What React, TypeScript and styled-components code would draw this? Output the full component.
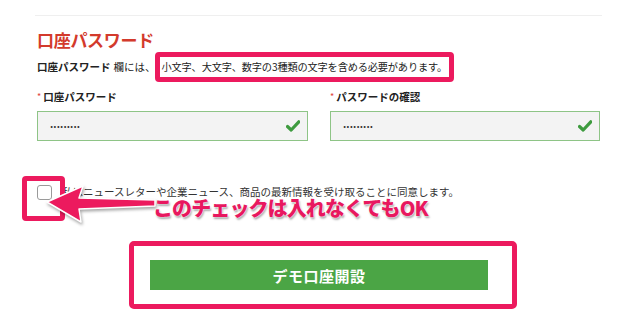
import React from "react";
import styled, { createGlobalStyle } from "styled-components";

const Global = createGlobalStyle`
  html, body { margin: 0; padding: 0; background: #fff; }
  body {
    font-family: "Noto Sans CJK JP", "Noto Sans", sans-serif;
    color: #222;
  }
`;

const PINK = "#ec1a5e";

const Page = styled.div`
  width: 640px;
  height: 318px;
  box-sizing: border-box;
  padding: 15px 38px 0 35px;
  overflow: hidden;
`;

const Divider = styled.div`
  height: 1px;
  background: #efefef;
`;

const Content = styled.div`
  padding-left: 2px;
  display: flex;
  flex-direction: column;
`;

const Title = styled.h2`
  margin: 14px 0 0;
  font-size: 17px;
  line-height: 20px;
  font-weight: 700;
  color: #d33a2c;
  letter-spacing: -0.3px;
`;

const Desc = styled.p`
  margin: 9px 0 0;
  font-size: 10.5px;
  line-height: 16px;
  color: #222;
`;

const DescStrong = styled.strong`
  font-weight: 700;
  margin-right: 3px;
`;

const Highlight = styled.span`
  position: relative;
  display: inline-block;
  margin-left: 6px;
  font-size: 10.2px;
  letter-spacing: -0.15px;
  &::after {
    content: "";
    position: absolute;
    left: -7px;
    right: -7px;
    top: -7px;
    bottom: -7px;
    border: 5px solid ${PINK};
    border-radius: 4px;
    pointer-events: none;
  }
`;

const Fields = styled.div`
  margin-top: 14px;
  display: grid;
  grid-template-columns: 271px 270px;
  column-gap: 22px;
`;

const FieldGroup = styled.div`
  display: flex;
  flex-direction: column;
  gap: 6px;
`;

const Label = styled.label`
  font-size: 10.5px;
  line-height: 16px;
  font-weight: 700;
  color: #222;
  display: flex;
  align-items: center;
  gap: 2px;
`;

const Req = styled.span`
  color: #e0443a;
  font-size: 9px;
  font-weight: 400;
`;

const Field = styled.div`
  height: 30px;
  box-sizing: border-box;
  border: 1px solid #8ec486;
  background: #f3f3f3;
  display: flex;
  align-items: center;
  justify-content: space-between;
  padding: 0 7px 0 12px;
`;

const Dots = styled.span`
  font-size: 10px;
  font-weight: 700;
  color: #333;
  letter-spacing: 0.1px;
  line-height: 10px;
  transform: translateY(-2px);
`;

const Check = () => (
  <svg width="14" height="12" viewBox="0 0 14 12">
    <path
      d="M1.5 6.5 L5.2 10 L12.8 1.8"
      fill="none"
      stroke="#3e9b3f"
      strokeWidth="3.2"
      strokeLinecap="round"
      strokeLinejoin="round"
    />
  </svg>
);

const CheckRow = styled.div`
  position: relative;
  margin-top: 43px;
  display: flex;
  align-items: center;
  gap: 10px;
  height: 16px;
`;

const Box = styled.span`
  width: 15px;
  height: 15px;
  box-sizing: border-box;
  border: 1px solid #9a9a9a;
  border-radius: 3px;
  background: #fff;
  flex: none;
`;

const CheckText = styled.span`
  font-size: 10.5px;
  line-height: 12px;
  color: #333;
`;

const Mark = styled.span`
  position: absolute;
  left: -15px;
  top: -8px;
  width: 43px;
  height: 45px;
  box-sizing: border-box;
  border: 5px solid ${PINK};
  border-radius: 4px;
`;

const Arrow = styled.svg`
  position: absolute;
  left: 0;
  top: 0;
  overflow: visible;
  filter: drop-shadow(1px 2px 1.5px rgba(0, 0, 0, 0.35));
`;

const Note = styled.span`
  position: absolute;
  left: 116px;
  top: 14px;
  white-space: nowrap;
  font-size: 20px;
  line-height: 20px;
  font-weight: 900;
  color: #e8185f;
  letter-spacing: -0.9px;
  text-shadow: 0 0 1px #fff, 0 0 2px #fff, 1px 2px 2px rgba(0, 0, 0, 0.35);
`;

const ButtonFrame = styled.div`
  margin-top: 41px;
  margin-left: 92px;
  width: 388px;
  height: 68px;
  box-sizing: border-box;
  border: 5px solid ${PINK};
  border-radius: 5px;
  padding: 14px 24px 14px 16px;
`;

const Submit = styled.button`
  width: 100%;
  height: 30px;
  border: none;
  background: #4ba545;
  color: #fff;
  font-family: "Noto Sans CJK JP", sans-serif;
  font-size: 15px;
  font-weight: 700;
  letter-spacing: 0.5px;
  display: flex;
  align-items: center;
  justify-content: center;
  padding: 0;
`;

export default function App() {
  return (
    <>
      <Global />
      <Page>
        <Divider />
        <Content>
          <Title>口座パスワード</Title>
          <Desc>
            <DescStrong>口座パスワード</DescStrong>欄には、
            <Highlight>小文字、大文字、数字の3種類の文字を含める必要があります。</Highlight>
          </Desc>
          <Fields>
            <FieldGroup>
              <Label>
                <Req>*</Req>口座パスワード
              </Label>
              <Field>
                <Dots>.........</Dots>
                <Check />
              </Field>
            </FieldGroup>
            <FieldGroup>
              <Label>
                <Req>*</Req>パスワードの確認
              </Label>
              <Field>
                <Dots>.........</Dots>
                <Check />
              </Field>
            </FieldGroup>
          </Fields>
          <CheckRow>
            <Box />
            <CheckText>私はニュースレターや企業ニュース、商品の最新情報を受け取ることに同意します。</CheckText>
            <Mark />
            <Arrow width="120" height="40" viewBox="0 0 120 40">
              <path
                d="M10 18 L46 2 L42 14 L118 16 L118 22 L42 25 L44 38 Z"
                fill={PINK}
                stroke="#fff"
                strokeWidth="1.5"
                strokeLinejoin="round"
              />
            </Arrow>
            <Note>このチェックは入れなくてもOK</Note>
          </CheckRow>
          <ButtonFrame>
            <Submit type="button">デモ口座開設</Submit>
          </ButtonFrame>
        </Content>
      </Page>
    </>
  );
}
